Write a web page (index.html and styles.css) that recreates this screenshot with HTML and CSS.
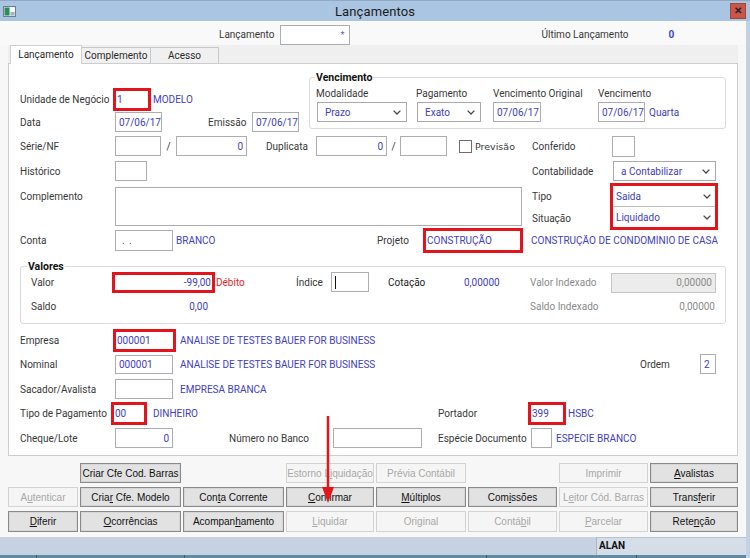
FILE: index.html
```html
<!DOCTYPE html>
<html lang="pt">
<head>
<meta charset="utf-8">
<title>Lançamentos</title>
<link rel="stylesheet" href="styles.css">
</head>
<body>
<div class="win">
  <div class="title">
    <div class="title-left">
      <svg class="appicon" viewBox="0 0 13 11" width="13" height="11"><rect x="0.5" y="0.5" width="12" height="10" fill="#e9eef2" stroke="#6b7f8f"/><rect x="1.5" y="1.5" width="5" height="8" fill="#2f8a5a"/><rect x="7.5" y="1.5" width="4" height="4" fill="#ffffff"/><rect x="7.5" y="6" width="4" height="3.5" fill="#9fb3c4"/></svg>
    </div>
    <div class="title-text">Lançamentos</div>
    <div class="title-right"><div class="close">&#x2715;</div></div>
  </div>

  <div class="client">
    <div class="hdr">
      <span class="lbl hdr-l1">Lançamento</span>
      <span class="inp hdr-inp"><span class="star">*</span></span>
      <span class="lbl hdr-l2">Último Lançamento</span>
      <span class="zero">0</span>
    </div>

    <div class="tabs">
      <div class="tab active">Lançamento</div>
      <div class="tab t2">Complemento</div>
      <div class="tab t3">Acesso</div>
    </div>

    <div class="panel">
      <div class="top">
        <div class="top-left">
          <div class="row r-a">
            <span class="lbl w93">Unidade de Negócio</span>
            <span class="inp red w38 h23">1</span>
            <span class="val ml2">MODELO</span>
          </div>
          <div class="row r-b">
            <span class="lbl w95">Data</span>
            <span class="inp w47">07/06/17</span>
            <span class="lbl ml46 w44">Emissão</span>
            <span class="inp w47">07/06/17</span>
          </div>
        </div>
        <fieldset class="group venc">
          <legend>Vencimento</legend>
          <div class="venc-body">
            <div class="vcol w90">
              <span class="lbl vl">Modalidade</span>
              <span class="sel w90"><span>Prazo</span><svg class="chev" viewBox="0 0 8 5"><path d="M0.6 0.6 4 4 7.4 0.6"/></svg></span>
            </div>
            <div class="vcol w64 ml10">
              <span class="lbl vl">Pagamento</span>
              <span class="sel w64"><span>Exato</span><svg class="chev" viewBox="0 0 8 5"><path d="M0.6 0.6 4 4 7.4 0.6"/></svg></span>
            </div>
            <div class="vcol w48 ml12">
              <span class="lbl">Vencimento Original</span>
              <span class="inp w48">07/06/17</span>
            </div>
            <div class="vcol ml57">
              <span class="lbl">Vencimento</span>
              <span class="vrow"><span class="inp w47">07/06/17</span><span class="val ml4">Quarta</span></span>
            </div>
          </div>
        </fieldset>
      </div>

      <div class="row r-c">
        <span class="lbl w95">Série/NF</span>
        <span class="inp w46"></span>
        <span class="slash w15">/</span>
        <span class="inp w71 right">0</span>
        <span class="lbl ml19 w50">Duplicata</span>
        <span class="inp w71 right">0</span>
        <span class="slash w13">/</span>
        <span class="inp w47"></span>
        <span class="chk ml12"></span>
        <span class="lbl chk-lbl ml3 w57">Previsão</span>
        <span class="lbl w80">Conferido</span>
        <span class="inp w23 h21"></span>
      </div>

      <div class="row r-d">
        <span class="lbl w95">Histórico</span>
        <span class="inp w32"></span>
        <span class="lbl ml385 w81">Contabilidade</span>
        <span class="sel w103"><span>a Contabilizar</span><svg class="chev" viewBox="0 0 8 5"><path d="M0.6 0.6 4 4 7.4 0.6"/></svg></span>
      </div>

      <div class="row r-e">
        <span class="lbl w95 lbl-top">Complemento</span>
        <span class="area"></span>
        <div class="tipo-labels ml10">
          <span class="lbl">Tipo</span>
          <span class="lbl">Situação</span>
        </div>
        <div class="redwrap">
          <span class="sel sel-in sep"><span>Saida</span><svg class="chev" viewBox="0 0 8 5"><path d="M0.6 0.6 4 4 7.4 0.6"/></svg></span>
          <span class="sel sel-in"><span>Liquidado</span><svg class="chev" viewBox="0 0 8 5"><path d="M0.6 0.6 4 4 7.4 0.6"/></svg></span>
        </div>
      </div>

      <div class="row r-f">
        <span class="lbl w95">Conta</span>
        <span class="inp w58 h21 dots">. .</span>
        <span class="val ml3 w201">BRANCO</span>
        <span class="lbl w46">Projeto</span>
        <span class="inp red w100 h25">CONSTRUÇÃO</span>
        <span class="val ml8 w187 clip">CONSTRUÇÃO DE CONDOMÍNIO DE CASA</span>
      </div>

      <fieldset class="group valores">
        <legend>Valores</legend>
        <div class="row v1">
          <span class="lbl w81">Valor</span>
          <span class="inp red w103 h21 right neg">-99,00</span>
          <span class="deb ml1 w80">Débito</span>
          <span class="lbl w35">Índice</span>
          <span class="inp w38 h20 cursor"><span class="caret"></span></span>
          <span class="lbl dark ml19 w76">Cotação</span>
          <span class="val w66">0,00000</span>
          <span class="lbl grey w81">Valor Indexado</span>
          <span class="inp dis w105 right">0,00000</span>
        </div>
        <div class="row v2">
          <span class="lbl w81">Saldo</span>
          <span class="val w96 right-t">0,00</span>
          <span class="spacer w322"></span>
          <span class="lbl grey w100">Saldo Indexado</span>
          <span class="grey w85 right-t">0,00000</span>
        </div>
      </fieldset>

      <div class="row r-emp">
        <span class="lbl w93">Empresa</span>
        <span class="inp red w63 h23">000001</span>
        <span class="val ml4">ANALISE DE TESTES BAUER FOR BUSINESS</span>
      </div>

      <div class="row r-nom">
        <span class="lbl w95">Nominal</span>
        <span class="inp w58 h19">000001</span>
        <span class="val ml7 w460">ANALISE DE TESTES BAUER FOR BUSINESS</span>
        <span class="lbl w60">Ordem</span>
        <span class="inp w16 h20">2</span>
      </div>

      <div class="row r-sac">
        <span class="lbl w95">Sacador/Avalista</span>
        <span class="inp w58"></span>
        <span class="val ml7">EMPRESA BRANCA</span>
      </div>

      <div class="row r-tp">
        <span class="lbl w91">Tipo de Pagamento</span>
        <span class="inp red w36 h23">00</span>
        <span class="val ml6 w285">DINHEIRO</span>
        <span class="lbl w90">Portador</span>
        <span class="inp red w38 h23">399</span>
        <span class="val ml2">HSBC</span>
      </div>

      <div class="row r-chq">
        <span class="lbl w95">Cheque/Lote</span>
        <span class="inp w58 right">0</span>
        <span class="lbl ml56 w104">Número no Banco</span>
        <span class="inp w89"></span>
        <span class="lbl ml16 w93">Espécie Documento</span>
        <span class="inp w21"></span>
        <span class="val ml4">ESPECIE BRANCO</span>
      </div>
    </div>

    <div class="btns">
      <span class="cell"></span>
      <span class="btn"><span>Criar Cfe Cod. Barras</span></span>
      <span class="cell"></span>
      <span class="btn dis"><span>Estorno L<u>i</u>quidação</span></span>
      <span class="btn dis"><span>Prévia Contábil</span></span>
      <span class="cell"></span>
      <span class="btn dis"><span>Imprimir</span></span>
      <span class="btn"><span><u>A</u>valistas</span></span>

      <span class="btn dis"><span>A<u>u</u>tenticar</span></span>
      <span class="btn"><span>Cria<u>r</u> Cfe. Modelo</span></span>
      <span class="btn"><span>Con<u>t</u>a Corrente</span></span>
      <span class="btn"><span><u>C</u>onfirmar</span></span>
      <span class="btn"><span><u>M</u>últiplos</span></span>
      <span class="btn"><span>Com<u>i</u>ssões</span></span>
      <span class="btn dis"><span>L<u>e</u>itor Cód. Barras</span></span>
      <span class="btn"><span>Trans<u>f</u>erir</span></span>

      <span class="btn"><span><u>D</u>iferir</span></span>
      <span class="btn"><span><u>O</u>corrências</span></span>
      <span class="btn"><span>Acompan<u>h</u>amento</span></span>
      <span class="btn dis"><span><u>L</u>iquidar</span></span>
      <span class="btn dis"><span>Original</span></span>
      <span class="btn dis"><span>Contá<u>b</u>il</span></span>
      <span class="btn dis"><span><u>P</u>arcelar</span></span>
      <span class="btn"><span>Rete<u>n</u>ção</span></span>
    </div>

    <div class="status">
      <div class="st-main">
        <span class="st-blank"></span>
        <span class="st-user">ALAN</span>
      </div>
      <div class="st-bottom">
        <span class="sb s1"></span><span class="sb s2"></span><span class="sb s3"></span><span class="sb s4"></span><span class="sb s5"></span>
      </div>
    </div>
  </div>

  <svg class="arrow" width="14" height="90" viewBox="0 0 14 90">
    <line x1="7" y1="0" x2="7" y2="74" stroke="#e3141b" stroke-width="2.5"/>
    <polygon points="1,71 13,71 7,87" fill="#e3141b"/>
  </svg>
</div>
</body>
</html>
```

FILE: styles.css
```css
* { box-sizing: border-box; margin: 0; padding: 0; }

body {
  width: 750px;
  height: 558px;
  overflow: hidden;
  font-family: Roboto, "Liberation Sans", sans-serif;
  font-size: 10px;
  color: #383838;
  background: #f4f4f4;
}

.win {
  position: relative;
  width: 750px;
  height: 558px;
  display: flex;
  flex-direction: column;
  background: #f6f6f6;
}

/* title bar */
.title {
  height: 21px;
  flex: none;
  display: grid;
  grid-template-columns: 1fr auto 1fr;
  align-items: center;
  background: #aac5e1;
  border-top: 1px solid #91a9c2;
}
.title-left { padding-left: 3px; display: flex; align-items: center; }
.appicon { display: block; }
.title-text {
  font-size: 13px;
  color: #1b1b1b;
  letter-spacing: 0.1px;
}
.title-right { display: flex; justify-content: flex-end; padding-right: 4px; }
.close {
  width: 16px;
  height: 16px;
  background: #c8564a;
  border: 1px solid #a4443a;
  color: #222;
  font-size: 10px;
  font-weight: bold;
  line-height: 14px;
  text-align: center;
}

/* client */
.client {
  flex: 1;
  display: flex;
  flex-direction: column;
  border-right: 4px solid #c2d2e4;
  background: #f7f7f7;
}

.hdr {
  height: 24px;
  padding-top: 3px;
  display: flex;
  align-items: center;
  background: #f9f9f9;
}
.hdr-l1 { margin-left: 219px; }
.hdr-inp { width: 70px; height: 19px; margin-left: 5px; justify-content: flex-end; }
.star { color: #6a56c8; font-size: 9px; padding-right: 1px; }
.hdr-l2 { margin-left: 192px; width: 86px; }
.zero { margin-left: 41px; color: #3b47e0; font-weight: bold; }

.tabs {
  height: 18px;
  margin: 0 8px;
  padding-left: 2px;
  display: flex;
  align-items: flex-end;
  background: #efefef;
}
.tab {
  height: 16px;
  border: 1px solid #c8c8c8;
  border-bottom: none;
  background: #f0f0f0;
  display: flex;
  align-items: center;
  justify-content: center;
  color: #2a2a2a;
}
.tab.active {
  position: relative;
  z-index: 2;
  width: 72px;
  height: 19px;
  margin-bottom: -1px;
  background: #fff;
  border-color: #d0d0d0;
  padding-bottom: 2px;
}
.t2 { width: 69px; border-left: none; }
.t3 { width: 68px; border-left: none; }

.panel {
  height: 393px;
  margin-left: 8px;
  width: 730px;
  flex: none;
  background: #fff;
  border: 1px solid #cdcdcd;
  padding: 0 10px 0 11px;
}

/* generic */
.row { display: flex; align-items: center; }
.lbl { white-space: nowrap; color: #383838; flex: none; }
.val { color: #4040c6; white-space: nowrap; flex: none; }
.grey { color: #8a8a8a; flex: none; white-space: nowrap; }
.dark { color: #222; }
.deb { color: #e2262b; flex: none; }
.spacer { flex: none; height: 1px; }
.inp {
  display: flex;
  align-items: center;
  flex: none;
  height: 20px;
  padding: 0 3px;
  border: 1px solid #abadb3;
  background: #fff;
  color: #4040c6;
  white-space: nowrap;
  overflow: hidden;
}
.inp.right { justify-content: flex-end; }
.inp.red { border: 3px solid #e3141b; padding: 0 1px; }
.inp.dis { background: #ececec; color: #8a8a8a; border-color: #c6c6c6; }
.right-t { text-align: right; }
.dots { padding-left: 6px; letter-spacing: 1px; }
.clip { overflow: hidden; text-overflow: clip; }
.slash { text-align: center; flex: none; color: #333; }
.chk {
  width: 13px; height: 13px; flex: none;
  border: 1px solid #6d6d6d; background: #fff;
}
.chk-lbl { font-family: "DejaVu Sans", sans-serif; font-size: 9.5px; }

.sel {
  display: flex;
  align-items: center;
  justify-content: space-between;
  flex: none;
  height: 20px;
  padding: 0 5px 0 7px;
  border: 1px solid #a9a9a9;
  background: #fff;
  color: #4040c6;
  white-space: nowrap;
}
.chev { width: 8px; height: 5px; fill: none; stroke: #444; stroke-width: 1.3; }

/* group boxes */
.group {
  border: 1px solid #dadada;
  border-radius: 3px;
  min-width: 0;
}
.group legend {
  font-weight: bold;
  font-size: 10.5px;
  line-height: 11px;
  color: #111;
  padding: 0 1px;
}

/* top block */
.top { display: flex; height: 69px; }
.top-left { width: 289px; flex: none; }
.r-a { margin-top: 24px; height: 23px; }
.r-b { margin-top: 1px; height: 20px; }
.venc {
  width: 417px;
  height: 57px;
  margin-top: 8px;
  padding: 5px 0 4px 7px;
}
.venc legend { margin-left: -2px; }
.venc-body { display: flex; }
.vcol { display: flex; flex-direction: column; gap: 3px; flex: none; }
.vl { margin-left: -1px; }
.vrow { display: flex; align-items: center; }

.r-c { margin-top: 3px; height: 20px; }
.r-d { margin-top: 5px; height: 20px; }
.r-e { margin-top: 2px; height: 46px; align-items: flex-start; }
.lbl-top { padding-top: 8px; }
.area {
  flex: none;
  width: 407px;
  height: 39px;
  margin-top: 4px;
  border: 1px solid #abadb3;
  background: #fff;
}
.tipo-labels {
  width: 78px;
  flex: none;
  display: flex;
  flex-direction: column;
  padding-top: 8px;
  gap: 11px;
}
.redwrap {
  width: 108px;
  height: 47px;
  border: 3px solid #e3141b;
  display: flex;
  flex-direction: column;
}
.sel-in { border: none; height: 20px; padding: 0 4px 0 3px; }
.sel-in.sep { border-bottom: 1px solid #bcbcbc; height: 21px; }

.r-f { margin-top: -1px; height: 25px; }

.valores {
  margin-top: 8px;
  width: 706px;
  padding: 0 0 10px 10px;
}
.valores legend { margin-left: -4px; }
.v1 { height: 21px; }
.v1 .cursor { align-self: flex-start; }
.caret { width: 1px; height: 13px; background: #111; }
.neg { padding-right: 2px; }
.v2 { margin-top: 6px; height: 14px; }

.r-emp { margin-top: 5px; height: 23px; }
.r-nom { margin-top: 2px; height: 20px; }
.r-sac { margin-top: 5px; height: 20px; }
.r-tp { margin-top: 3px; height: 23px; }
.r-chq { margin-top: 3px; height: 20px; }

/* widths & offsets */
.w13{width:13px}.w15{width:15px}.w16{width:16px}.w21{width:21px}.w23{width:23px}.w32{width:32px}
.w35{width:35px}.w36{width:36px}.w38{width:38px}.w44{width:44px}.w46{width:46px}.w47{width:47px}
.w48{width:48px}.w50{width:50px}.w57{width:57px}.w58{width:58px}.w60{width:60px}.w63{width:63px}
.w64{width:64px}.w66{width:66px}.w71{width:71px}.w76{width:76px}.w80{width:80px}.w81{width:81px}
.w85{width:85px}.w89{width:89px}.w90{width:90px}.w91{width:91px}.w93{width:93px}.w95{width:95px}
.w96{width:96px}.w100{width:100px}.w103{width:103px}.w104{width:104px}.w105{width:105px}
.w187{width:187px}.w201{width:201px}.w285{width:285px}.w322{width:322px}.w460{width:460px}
.h19{height:19px}.h20{height:20px}.h21{height:21px}.h23{height:23px}.h25{height:25px}
.ml1{margin-left:1px}.ml2{margin-left:2px}.ml3{margin-left:3px}.ml4{margin-left:4px}.ml6{margin-left:6px}
.ml7{margin-left:7px}.ml8{margin-left:8px}.ml10{margin-left:10px}.ml12{margin-left:12px}
.ml16{margin-left:16px}.ml19{margin-left:19px}.ml46{margin-left:46px}.ml56{margin-left:56px}
.ml57{margin-left:57px}.ml385{margin-left:385px}

/* buttons */
.btns {
  margin: 7px 0 0 8px;
  display: grid;
  grid-template-columns: 70px 101px 101px 88px 90px 89px 89px 88px;
  grid-template-rows: 20px 20px 21px;
  column-gap: 2px;
  row-gap: 4px;
}
.btn {
  display: flex;
  align-items: center;
  justify-content: center;
  font-family: "Liberation Sans", Arial, sans-serif;
  font-size: 10px;
  color: #111;
  background: #e2e2e2;
  border: 1px solid #8a8a8a;
  box-shadow: inset 0 0 0 1px #d6d6d6;
  white-space: nowrap;
}
.btn u { text-underline-offset: 1px; }
.btn.dis {
  color: #a8a8a8;
  background: #f5f5f5;
  border-color: #d3d3d3;
  box-shadow: none;
}

/* status */
.status {
  margin-top: 5px;
  flex: 1;
  display: flex;
  flex-direction: column;
}
.st-main {
  flex: 1;
  display: flex;
  background: #c6d2e1;
}
.st-blank { width: 596px; }
.st-user {
  flex: 1;
  background: #d4dde8;
  border-left: 1px solid #aab8c8;
  border-top: 1px solid #b5c3d3;
  font-weight: bold;
  color: #111;
  padding: 2px 0 0 2px;
}
.st-bottom {
  height: 3px;
  display: flex;
  background: #5f8aa1;
}
.sb { height: 3px; border-right: 1px solid #3d5d70; }
.s1 { width: 37px; } .s2 { width: 148px; } .s3 { width: 302px; } .s4 { width: 150px; } .s5 { flex: 1; border-right: none; }

/* overlay annotation */
.arrow {
  position: absolute;
  left: 321px;
  top: 416px;
}
```
